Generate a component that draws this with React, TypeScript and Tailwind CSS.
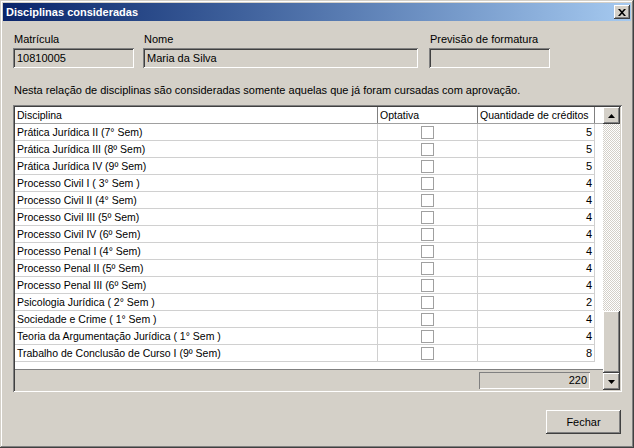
import React from 'react';

const ROWS: { name: string; credits: number }[] = [
  { name: 'Prática Jurídica II (7° Sem)', credits: 5 },
  { name: 'Prática Jurídica III (8º Sem)', credits: 5 },
  { name: 'Prática Jurídica IV (9º Sem)', credits: 5 },
  { name: 'Processo Civil I ( 3° Sem )', credits: 4 },
  { name: 'Processo Civil II (4° Sem)', credits: 4 },
  { name: 'Processo Civil III (5º Sem)', credits: 4 },
  { name: 'Processo Civil IV (6º Sem)', credits: 4 },
  { name: 'Processo Penal I (4° Sem)', credits: 4 },
  { name: 'Processo Penal II (5º Sem)', credits: 4 },
  { name: 'Processo Penal III (6º Sem)', credits: 4 },
  { name: 'Psicologia Jurídica ( 2° Sem )', credits: 2 },
  { name: 'Sociedade e Crime ( 1° Sem )', credits: 4 },
  { name: 'Teoria da Argumentação Jurídica ( 1° Sem )', credits: 4 },
  { name: 'Trabalho de Conclusão de Curso I (9º Sem)', credits: 8 },
];

const raised =
  'shadow-[inset_-1px_-1px_#404040,inset_1px_1px_#ffffff,inset_-2px_-2px_#808080,inset_2px_2px_#d4d0c8]';
const sunken =
  'shadow-[inset_1px_1px_#808080,inset_-1px_-1px_#ffffff,inset_2px_2px_#404040,inset_-2px_-2px_#d4d0c8]';

function Field({ label, value, width }: { label: string; value: string; width: string }) {
  return (
    <div className={`flex flex-col ${width}`}>
      <div className="h-[13px] leading-[13px] pl-[1px] mb-[2px]">{label}</div>
      <div className={`h-[20px] leading-[20px] bg-[#d4d0c8] pl-[4px] ${sunken}`}>{value}</div>
    </div>
  );
}

function Arrow({ up }: { up?: boolean }) {
  return (
    <svg width="7" height="4" viewBox="0 0 7 4">
      <path d={up ? 'M3.5 0L7 4H0Z' : 'M0 0H7L3.5 4Z'} fill="#000" />
    </svg>
  );
}

export default function App() {
  return (
    <div
      className="w-[634px] h-[448px] bg-[#d4d0c8] p-[3px] flex flex-col text-[11px] text-black shadow-[inset_-1px_-1px_#404040,inset_1px_1px_#d4d0c8,inset_-2px_-2px_#808080,inset_2px_2px_#ffffff]"
      style={{ fontFamily: '"Liberation Sans", Arial, sans-serif' }}
    >
      <div className="h-[18px] flex items-center justify-between pl-[3px] pr-[1px] bg-gradient-to-r from-[#0a246a] to-[#a6caf0]">
        <span className="text-white font-bold leading-[13px]">Disciplinas consideradas</span>
        <button className={`w-[16px] h-[14px] bg-[#d4d0c8] flex items-center justify-center ${raised}`}>
          <svg width="8" height="7" viewBox="0 0 8 7">
            <path d="M0 0h2l2 2.3L6 0h2L5 3.5 8 7H6L4 4.7 2 7H0l3-3.5z" fill="#000" />
          </svg>
        </button>
      </div>

      <div className="flex flex-col pl-[10px]">
        <div className="flex mt-[12px]">
          <Field label="Matrícula" value="10810005" width="w-[121px]" />
          <div className="ml-[9px]">
            <Field label="Nome" value="Maria da Silva" width="w-[275px]" />
          </div>
          <div className="ml-[11px]">
            <Field label="Previsão de formatura" value="" width="w-[121px]" />
          </div>
        </div>

        <p className="mt-[16px] h-[13px] leading-[13px] pl-[1px]">
          Nesta relação de disciplinas são consideradas somente aquelas que já foram cursadas com aprovação.
        </p>

        <div className={`mt-[8px] w-[609px] h-[287px] p-[2px] bg-white text-[10.5px] ${sunken}`}>
          <div className="flex h-full">
            <div className="w-[588px] flex flex-col">
              <div className="h-[17px] flex border-b border-[#a0a0a0]">
                <div className="w-[363px] border-r border-[#808080] pl-[2px] leading-[16px]">Disciplina</div>
                <div className="w-[100px] border-r border-[#808080] pl-[2px] leading-[16px]">Optativa</div>
                <div className="w-[117px] border-r border-[#808080] pl-[2px] leading-[16px] whitespace-nowrap">
                  Quantidade de créditos
                </div>
              </div>
              {ROWS.map((r) => (
                <div key={r.name} className="h-[17px] flex">
                  <div className="w-[363px] border-r border-b border-[#d0d0d0] pl-[2px] leading-[16px] whitespace-nowrap">
                    {r.name}
                  </div>
                  <div className="w-[100px] border-r border-b border-[#d0d0d0] flex items-center justify-center">
                    <div className="w-[13px] h-[13px] border border-[#a0a0a0] bg-white" />
                  </div>
                  <div className="w-[117px] border-r border-b border-[#d0d0d0] text-right pr-[2px] leading-[16px] text-[11px]">
                    {r.credits}
                  </div>
                </div>
              ))}
              <div className="flex-1" />
              <div className="h-[21px] bg-[#d4d0c8] border-t border-[#808080] flex justify-end pr-[13px]">
                <div className="mt-[2px] w-[111px] h-[17px] leading-[17px] text-right pr-[3px] text-[11px] shadow-[inset_1px_1px_#808080,inset_-1px_-1px_#ffffff]">
                  220
                </div>
              </div>
            </div>
            <div className="w-[17px] flex flex-col">
              <div className={`h-[17px] bg-[#d4d0c8] flex items-center justify-center ${raised}`}>
                <Arrow up />
              </div>
              <div className="h-[187px] bg-[repeating-conic-gradient(#d4d0c8_0_25%,#ffffff_0_50%)] bg-[length:2px_2px]" />
              <div className={`flex-1 bg-[#d4d0c8] ${raised}`} />
              <div className={`h-[17px] bg-[#d4d0c8] flex items-center justify-center ${raised}`}>
                <Arrow />
              </div>
            </div>
          </div>
        </div>

        <div className="w-[609px] flex justify-end mt-[18px] pr-[1px]">
          <button className={`w-[75px] h-[24px] bg-[#d4d0c8] ${raised}`}>Fechar</button>
        </div>
      </div>
    </div>
  );
}
